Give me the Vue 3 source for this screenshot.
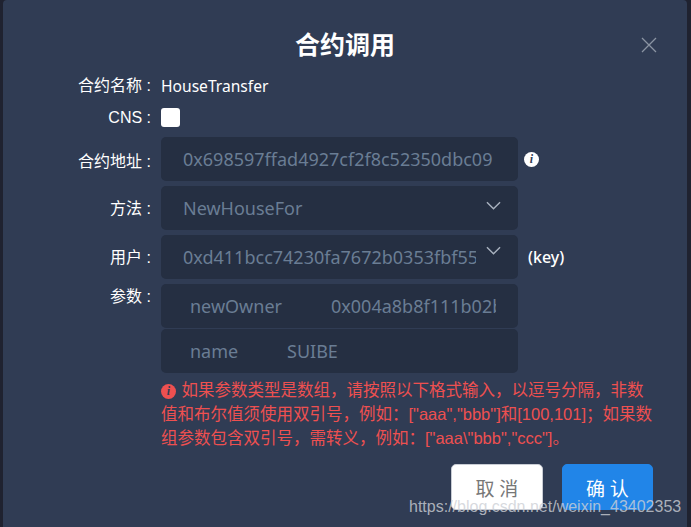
<template>
  <div class="page">
    <div class="dialog">
      <div class="dialog-header">
        <h3>合约调用</h3>
        <svg class="close-icon" width="16" height="16" viewBox="0 0 16 16">
          <path d="M1 1L15 15M15 1L1 15" stroke="#8b94a3" stroke-width="1.3" fill="none" />
        </svg>
      </div>

      <div class="form-row name-row">
        <label>合约名称 :</label>
        <span class="plain">HouseTransfer</span>
      </div>
      <div class="form-row cns-row">
        <label>CNS :</label>
        <span class="checkbox"></span>
      </div>
      <div class="form-row addr-row">
        <label>合约地址 :</label>
        <div class="field"><span class="clip">{{ address }}</span></div>
        <span class="info-icon">i</span>
      </div>
      <div class="form-row">
        <label>方法 :</label>
        <div class="field">
          <span class="clip">NewHouseFor</span>
          <svg class="arrow" width="15" height="9" viewBox="0 0 16 9">
            <path d="M1 1L8 8L15 1" stroke="#a9b2bf" stroke-width="1.5" fill="none" />
          </svg>
        </div>
      </div>
      <div class="form-row">
        <label>用户 :</label>
        <div class="field user-field">
          <span class="clip">0xd411bcc74230fa7672b0353fbf55d3c9a1e7</span>
          <svg class="arrow" width="15" height="9" viewBox="0 0 16 9">
            <path d="M1 1L8 8L15 1" stroke="#a9b2bf" stroke-width="1.5" fill="none" />
          </svg>
        </div>
        <span class="key">(key)</span>
      </div>
      <div class="form-row params-row">
        <label>参数 :</label>
        <div class="params">
          <div class="param" v-for="p in params" :key="p.name">
            <span class="param-name" :style="{ width: p.width + 'px' }">{{ p.name }}</span>
            <span class="clip">{{ p.value }}</span>
          </div>
        </div>
      </div>

      <p class="note">
        <span class="note-icon">i</span>
        如果参数类型是数组，请按照以下格式输入，以逗号分隔，非数值和布尔值须使用双引号，例如：["aaa","bbb"]和[100,101]；如果数组参数包含双引号，需转义，例如：["aaa\"bbb","ccc"]。
      </p>

      <div class="footer">
        <button class="btn btn-cancel">取 消</button>
        <button class="btn btn-primary">确 认</button>
      </div>
    </div>
    <span class="watermark">https://blog.csdn.net/weixin_43402353</span>
  </div>
</template>

<script setup>
const address = '0x698597ffad4927cf2f8c52350dbc09'

const params = [
  { name: 'newOwner', width: 141, value: '0x004a8b8f111b02bd7c1e5' },
  { name: 'name', width: 97, value: 'SUIBE' }
]
</script>

<style>
html,
body {
  margin: 0;
  background: #1f2230;
}
</style>

<style scoped>
.page {
  position: relative;
  width: 691px;
  height: 527px;
  padding: 0 4px 0 3px;
  box-sizing: border-box;
  overflow: hidden;
  background: #1f2230;
  font-family: "Liberation Sans", "Noto Sans CJK SC", sans-serif;
}

.dialog {
  height: 527px;
  box-sizing: border-box;
  background: #303c54;
  border-radius: 4px 4px 0 0;
}

.dialog-header {
  position: relative;
  height: 74px;
  padding-top: 30px;
  box-sizing: border-box;
  text-align: center;
}

.dialog-header h3 {
  margin: 0;
  font-size: 25px;
  line-height: 30px;
  font-weight: 700;
  color: #fff;
}

.close-icon {
  position: absolute;
  top: 37px;
  right: 30px;
}

.form-row {
  display: flex;
  align-items: center;
  min-height: 44px;
  margin-bottom: 5px;
}

.form-row label {
  width: 148px;
  flex: none;
  margin-top: 2px;
  margin-right: 10px;
  text-align: right;
  font-size: 16px;
  line-height: 22px;
  color: #fff;
}

.name-row {
  min-height: 24px;
  margin-bottom: 7px;
}

.name-row label {
  margin-top: 0;
}

.cns-row {
  min-height: 24px;
  margin-bottom: 8px;
}

.cns-row label {
  margin-top: 1px;
}

.addr-row label {
  margin-top: 6px;
}

.plain {
  font-family: "Noto Sans", sans-serif;
  font-size: 15.6px;
  color: #fff;
}

.checkbox {
  width: 19px;
  height: 19px;
  background: #fff;
  border-radius: 3px;
}

.field {
  display: flex;
  align-items: center;
  width: 357px;
  height: 44px;
  padding: 0 22px;
  box-sizing: border-box;
  background: #252f42;
  border-radius: 5px;
  font-family: "Noto Sans", sans-serif;
  font-size: 18px;
  color: #6a7d94;
}

.clip {
  flex: 1;
  min-width: 0;
  overflow: hidden;
  white-space: nowrap;
}

.arrow {
  flex: none;
  margin: -6px -5px 0 10px;
}

.user-field .arrow {
  margin-top: -14px;
}

.info-icon {
  width: 15px;
  height: 15px;
  margin-left: 6px;
  border-radius: 50%;
  background: #fff;
  color: #303c54;
  font: italic 700 12px/15px "Liberation Serif", serif;
  text-align: center;
}

.key {
  margin-left: 10px;
  font-family: "Noto Sans", sans-serif;
  font-size: 16px;
  font-weight: 500;
  color: #fff;
}

.params-row {
  align-items: flex-start;
  margin-bottom: 0;
}

.params-row label {
  margin-top: 0;
  padding-top: 2px;
}

.param {
  display: flex;
  align-items: center;
  width: 357px;
  height: 44px;
  margin-bottom: 1px;
  padding: 0 22px 0 29px;
  box-sizing: border-box;
  background: #252f42;
  border-radius: 5px;
  font-family: "Noto Sans", sans-serif;
  font-size: 18px;
  color: #6a7d94;
}

.param-name {
  flex: none;
}

.note {
  width: 494px;
  margin: 4px 0 0 158px;
  font-size: 16.5px;
  line-height: 24px;
  color: #ee5050;
}

.note-icon {
  display: inline-block;
  width: 15px;
  height: 15px;
  margin-right: 1px;
  border-radius: 50%;
  background: #ee5050;
  color: #303c54;
  font: italic 700 12px/15px "Liberation Serif", serif;
  text-align: center;
  vertical-align: 1px;
}

.footer {
  display: flex;
  justify-content: flex-end;
  gap: 19px;
  margin-top: 14px;
  padding-right: 34px;
}

.btn {
  width: 92px;
  height: 46px;
  padding: 0;
  border-radius: 5px;
  font-family: "Liberation Serif", "Noto Sans CJK SC", serif;
  font-size: 19px;
}

.btn-cancel {
  background: #fff;
  border: 1px solid #c8ccd4;
  color: #777;
}

.btn-primary {
  width: 91px;
  background: #2185e8;
  border: 1px solid #2185e8;
  color: #fff;
}

.watermark {
  position: absolute;
  left: 409px;
  top: 498px;
  font-size: 16px;
  color: rgba(205, 208, 214, 0.8);
}
</style>
